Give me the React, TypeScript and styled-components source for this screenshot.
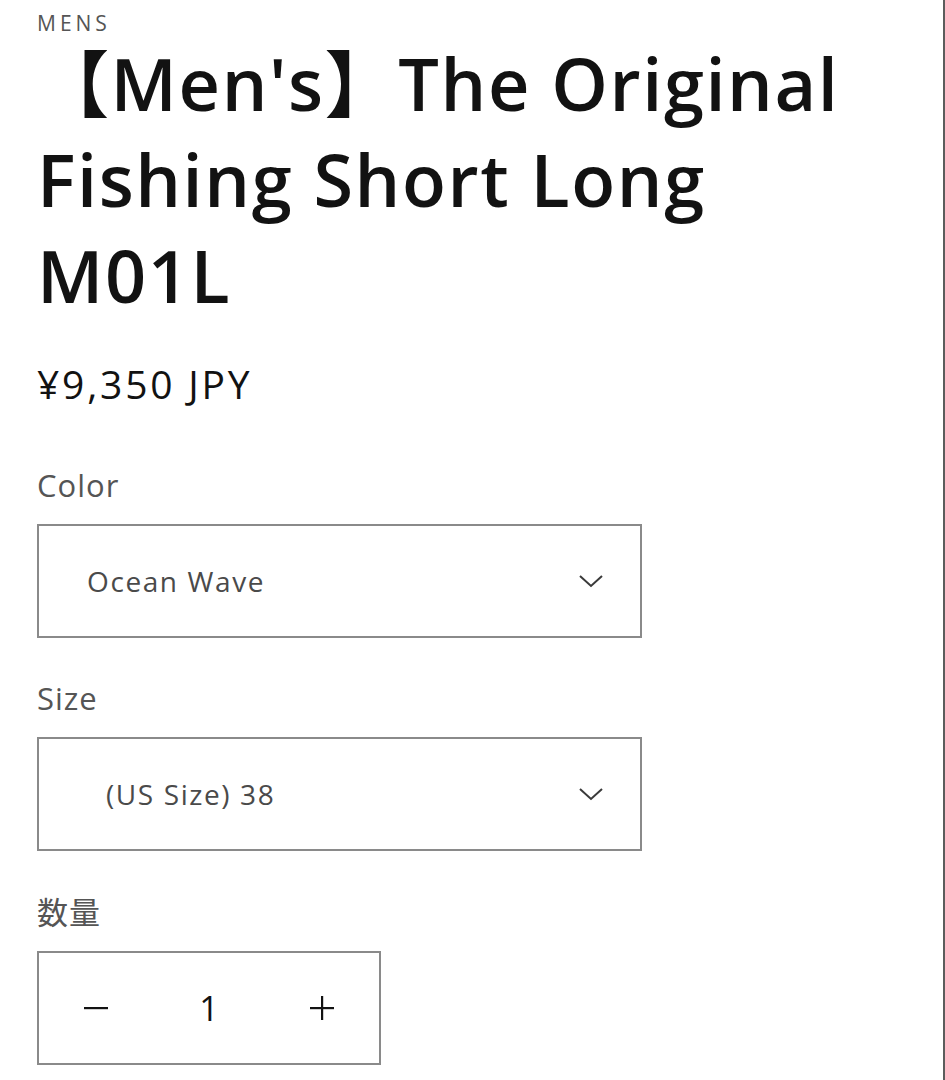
import React from 'react';
import styled, { createGlobalStyle } from 'styled-components';

const GlobalStyle = createGlobalStyle`
	html, body {
		margin: 0;
		padding: 0;
		background: #ffffff;
		overflow: hidden;
	}
	body {
		font-family: 'Open Sans', 'Noto Sans', 'Noto Sans CJK JP', sans-serif;
		color: #121212;
	}
`;

const Page = styled.div`
	box-sizing: border-box;
	width: 945px;
	height: 1080px;
	padding: 8px 0 0 37px;
	border-right: 2px solid #5c5c5c;
	display: flex;
	flex-direction: column;
`;

const Vendor = styled.p`
	margin: 0;
	font-size: 21px;
	line-height: 30px;
	letter-spacing: 4px;
	color: #555555;
	text-transform: uppercase;
`;

const Title = styled.h1`
	margin: -6px 0 0;
	font-family: 'Open Sans', 'Noto Sans CJK JP', sans-serif;
	font-weight: 600;
	font-size: 72px;
	line-height: 96px;
	letter-spacing: 1.6px;
	color: #121212;
	max-width: 860px;
`;

const Bracket = styled.span`
	font-family: 'Noto Sans CJK JP', sans-serif;
	font-weight: 700;
`;

const Price = styled.div`
	margin-top: 36px;
	font-size: 39px;
	line-height: 50px;
	letter-spacing: 2.8px;
	color: #121212;
`;

const Field = styled.div<{ gap: number }>`
	display: flex;
	flex-direction: column;
	margin-top: ${(p) => p.gap}px;
`;

const Label = styled.label`
	font-family: 'Open Sans', 'Noto Sans CJK JP', sans-serif;
	font-size: 31px;
	line-height: 44px;
	letter-spacing: 1px;
	color: #555555;
	margin-bottom: 17px;
`;

const SelectBox = styled.div<{ indent: number }>`
	box-sizing: border-box;
	width: 605px;
	height: 114px;
	border: 2px solid #8a8a8a;
	display: flex;
	align-items: center;
	justify-content: space-between;
	padding: 0 36px 0 ${(p) => p.indent}px;
`;

const SelectValue = styled.span`
	font-size: 28px;
	letter-spacing: 1.6px;
	color: #4a4a4a;
`;

const Chevron = () => (
	<svg width="26" height="14" viewBox="0 0 26 14" fill="none">
		<path d="M2 2 L13 12 L24 2" stroke="#3a3a3a" strokeWidth="2" />
	</svg>
);

const Quantity = styled.div`
	box-sizing: border-box;
	width: 344px;
	height: 114px;
	border: 2px solid #8a8a8a;
	display: grid;
	grid-template-columns: 1fr 1fr 1fr;
	align-items: center;
`;

const QtyButton = styled.button`
	background: none;
	border: none;
	padding: 0;
	display: flex;
	justify-content: center;
	align-items: center;
	color: #121212;
	cursor: pointer;
`;

const QtyValue = styled.span`
	text-align: center;
	font-size: 34px;
	color: #121212;
`;

const Minus = () => (
	<svg width="24" height="4" viewBox="0 0 24 4">
		<rect x="0" y="1" width="24" height="2.2" fill="#121212" />
	</svg>
);

const Plus = () => (
	<svg width="24" height="24" viewBox="0 0 24 24">
		<rect x="0" y="11" width="24" height="2.2" fill="#121212" />
		<rect x="11" y="0" width="2.2" height="24" fill="#121212" />
	</svg>
);

const App = () => {
	return (
		<>
			<GlobalStyle />
			<Page>
				<Vendor>Mens</Vendor>
				<Title>
					<Bracket>【</Bracket>Men's<Bracket>】</Bracket>The Original Fishing Short Long M01L
				</Title>
				<Price>¥9,350 JPY</Price>
				<Field gap={54}>
					<Label>Color</Label>
					<SelectBox indent={48}>
						<SelectValue>Ocean Wave</SelectValue>
						<Chevron />
					</SelectBox>
				</Field>
				<Field gap={38}>
					<Label>Size</Label>
					<SelectBox indent={67}>
						<SelectValue>(US Size) 38</SelectValue>
						<Chevron />
					</SelectBox>
				</Field>
				<Field gap={39}>
					<Label>数量</Label>
					<Quantity>
						<QtyButton aria-label="decrease">
							<Minus />
						</QtyButton>
						<QtyValue>1</QtyValue>
						<QtyButton aria-label="increase">
							<Plus />
						</QtyButton>
					</Quantity>
				</Field>
			</Page>
		</>
	);
};

export default App;
